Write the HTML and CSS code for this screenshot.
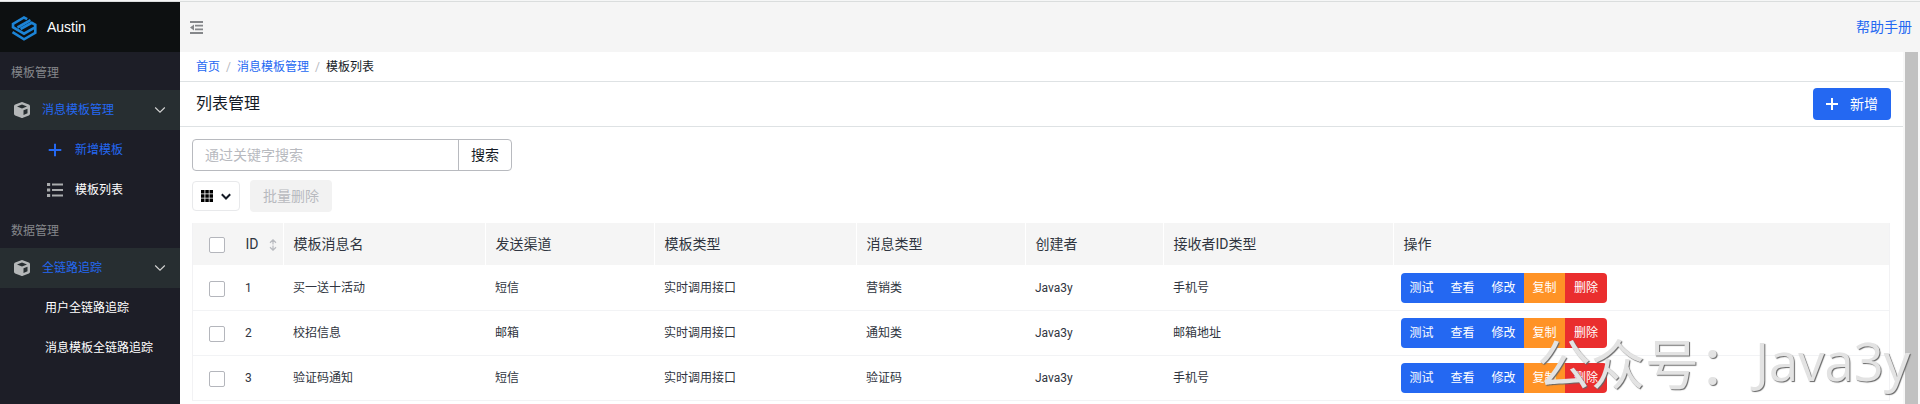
FILE: index.html
```html
<!DOCTYPE html>
<html lang="zh-CN">
<head>
<meta charset="utf-8">
<title>Austin</title>
<link rel="stylesheet" href="styles.css">
</head>
<body>
<svg class="defs" width="0" height="0">
  <symbol id="cube" viewBox="0 0 16 16"><path fill-rule="evenodd" d="M7.200.2a2 2 0 0 1 1.600 0l6 2.300c.7.3 1.200 1 1.200 1.700v7.500c0 .8-.4 1.400-1.100 1.700l-6 2.400a2 2 0 0 1-1.800 0l-6-2.400A1.900 1.900 0 0 1 0 11.700V4.200c0-.8.5-1.400 1.200-1.700zM8 2.400 3 4.400 8 6.500l5-2.100zM9.500 12.900l4-1.700V6.700L9.500 8.300z"/></symbol>
  <symbol id="down" viewBox="0 0 12 12"><path d="M1.200 3.500 6 8.200l4.800-4.700" fill="none" stroke="currentColor" stroke-width="1.100"/></symbol>
</svg>
<header class="header">
  <div class="brand">
    <svg class="logo" viewBox="0 0 26 26" fill="none" stroke="#1c84d6" stroke-width="2.600"><path d="M16.200 3.200 13 1.500 2 8v3.200l11 6.500 11-6.300"/><path d="M1.500 16.200 13 23.300l11.300-6.500V8.800l-3.600-2L9.500 13"/><path d="M19.500 4.200 6.500 11.500"/></svg>
    <span>Austin</span>
  </div>
  <div class="topbar">
    <svg class="fold" viewBox="0 0 13 13"><path d="M0 0h13v2H0zM5 3.800h8v1.800H5zM5 7.400h8v1.800H5zM0 11h13v2H0zM0 6.500l4-3v6z"/></svg>
    <a class="help">帮助手册</a>
  </div>
</header>
<div class="body">
  <nav class="side">
    <div class="label">模板管理</div>
    <a class="group"><svg class="cube"><use href="#cube"/></svg><span>消息模板管理</span><svg class="down"><use href="#down"/></svg></a>
    <a class="item active"><svg class="ico" viewBox="0 0 16 16"><path d="M7 1.700h2V7h5.300v2H9v5.300H7V9H1.700V7H7z"/></svg><span>新增模板</span></a>
    <a class="item"><svg class="ico list" viewBox="0 0 16 16"><path d="M0 1h3.200v3H0zM0 6.500h3.200v3H0zM0 12h3.200v3H0zM5 1.500h11v2H5zM5 7h11v2H5zM5 12.500h11v2H5z"/></svg><span>模板列表</span></a>
    <div class="label">数据管理</div>
    <a class="group"><svg class="cube"><use href="#cube"/></svg><span>全链路追踪</span><svg class="down"><use href="#down"/></svg></a>
    <a class="item plain">用户全链路追踪</a>
    <a class="item plain">消息模板全链路追踪</a>
  </nav>
  <main class="main">
    <div class="crumbs"><a>首页</a><i>/</i><a>消息模板管理</a><i>/</i><span>模板列表</span></div>
    <div class="titlebar"><h1>列表管理</h1><button class="add"><svg viewBox="0 0 12 12"><path d="M5 0h2v5h5v2H7v5H5V7H0V5h5z"/></svg>新增</button></div>
    <div class="content">
      <div class="search"><div class="input">通过关键字搜索</div><button>搜索</button></div>
      <div class="tools">
        <button class="cols"><svg width="12" height="12" viewBox="0 0 12 12"><path d="M0 0h3.500v3.500H0zM4.300 0h3.500v3.500H4.300zM8.500 0H12v3.500H8.500zM0 4.300h3.500v3.500H0zM4.300 4.300h3.500v3.500H4.300zM8.500 4.300H12v3.500H8.500zM0 8.500h3.500V12H0zM4.300 8.500h3.500V12H4.300zM8.500 8.500H12V12H8.500z"/></svg><svg width="10" height="8" viewBox="0 0 10 8"><path d="M.8 2.300 5 6.500l4.200-4.200" fill="none" stroke="#151b26" stroke-width="2"/></svg></button>
        <button class="bulk">批量删除</button>
      </div>
      <div class="table">
        <div class="row head"><div><b class="check"></b></div><div>ID<svg class="sort" viewBox="0 0 8 12"><path d="M1 3.700 4 .8l3 2.900M4 1v4.500M1 8.300l3 2.900 3-2.900M4 11V6.500" fill="none" stroke="#b8babf" stroke-width="1.200"/></svg></div><div>模板消息名</div><div>发送渠道</div><div>模板类型</div><div>消息类型</div><div>创建者</div><div>接收者ID类型</div><div>操作</div></div>
        <div class="row"><div><b class="check"></b></div><div>1</div><div>买一送十活动</div><div>短信</div><div>实时调用接口</div><div>营销类</div><div>Java3y</div><div>手机号</div><div class="ops"><a>测试</a><a>查看</a><a>修改</a><a class="copy">复制</a><a class="del">删除</a></div></div>
        <div class="row"><div><b class="check"></b></div><div>2</div><div>校招信息</div><div>邮箱</div><div>实时调用接口</div><div>通知类</div><div>Java3y</div><div>邮箱地址</div><div class="ops"><a>测试</a><a>查看</a><a>修改</a><a class="copy">复制</a><a class="del">删除</a></div></div>
        <div class="row"><div><b class="check"></b></div><div>3</div><div>验证码通知</div><div>短信</div><div>实时调用接口</div><div>验证码</div><div>Java3y</div><div>手机号</div><div class="ops"><a>测试</a><a>查看</a><a>修改</a><a class="copy">复制</a><a class="del">删除</a></div></div>
      </div>
    </div>
  </main>
  <div class="scroll"><div class="thumb"></div></div>
</div>
<div class="watermark">公众号：<span>Java3y</span></div>
</body>
</html>
```
FILE: styles.css
```css
* { box-sizing: border-box; }
body { margin: 0; height: 404px; overflow: hidden; display: flex; flex-direction: column; border-top: 1px solid #f5f6f6; font: 12px/18px Roboto, "Noto Sans CJK SC", sans-serif; color: #151b26; background: #fff; }
button { font: inherit; margin: 0; padding: 0; border: 0; display: flex; align-items: center; justify-content: center; }
.defs { position: absolute; }
.header { display: flex; height: 51px; flex: none; border-top: 1px solid #dadddd; background: #f5f5f5; }
.brand { width: 180px; background: #0d1011; display: flex; align-items: center; padding-left: 11px; color: #fff; font: 14px/20px "Liberation Sans", sans-serif; }
.logo { width: 26px; height: 26px; margin: 3px 10px 0 0; }
.topbar { flex: 1; display: flex; justify-content: space-between; align-items: center; padding: 0 8px 0 10px; }
.fold { width: 13px; height: 13px; fill: #85878a; }
.help { color: #2468f2; font-size: 14px; }
.body { display: flex; flex: 1; min-height: 0; }
.side { width: 180px; background: #1d1e27; color: #fff; }
.label { height: 38px; line-height: 43px; padding-left: 11px; color: #85878b; }
.group { height: 40px; display: flex; align-items: center; padding: 0 14px; background: #272e31; color: #2468f2; }
.cube { width: 16px; height: 16px; fill: #b4b7b8; margin-right: 12px; }
.down { width: 12px; height: 12px; margin-left: auto; color: #d4d4d4; }
.item { height: 40px; display: flex; align-items: center; padding-left: 47px; }
.ico { width: 16px; height: 16px; margin-right: 12px; fill: #aaacae; }
.active { color: #2468f2; }
.active .ico { fill: #2468f2; }
.plain { padding-left: 45px; }
.main { flex: 1; min-width: 0; }
.crumbs { height: 30px; padding-left: 16px; border-bottom: 1px solid #dee2e4; display: flex; align-items: center; }
.crumbs a { color: #2468f2; }
.crumbs i { font-style: normal; color: #b8babf; width: 17px; padding-left: 6px; }
.titlebar { height: 45px; border-bottom: 1px solid #dee2e4; display: flex; justify-content: space-between; align-items: center; padding: 0 12px 0 16px; }
h1 { margin: 0; font-size: 16px; font-weight: 400; }
.add { width: 78px; height: 32px; border-radius: 4px; background: #2468f2; color: #fff; font-size: 14px; gap: 12px; }
.add svg { width: 12px; height: 12px; fill: #fff; }
.content { padding: 12px 13px 0 12px; }
.search { display: flex; width: 320px; height: 32px; border: 1px solid #b8babf; border-radius: 4px; font-size: 14px; }
.input { flex: 1; line-height: 30px; padding-left: 12px; color: #b8babf; }
.search button { width: 53px; border-left: 1px solid #b8babf; background: none; color: #151b26; }
.tools { display: flex; gap: 10px; align-items: center; margin: 9px 0 11px; }
.cols { width: 48px; height: 30px; border: 1px solid #e8e9eb; border-radius: 4px; background: #fff; gap: 8px; }
.bulk { width: 82px; height: 32px; border-radius: 4px; background: #f2f2f2; color: #b8babf; font-size: 14px; }
.table { border: solid #f2f2f4; border-width: 0 1px; }
.row { display: grid; grid-template-columns: 43px 48px 202px 169px 202px 169px 138px 230px 1fr; height: 45px; border-bottom: 1px solid #f2f3f5; color: #303540; }
.row > div { display: flex; align-items: center; padding-left: 9px; }
.row > div:first-child { padding-left: 16px; }
.head { height: 43px; background: #f5f5f5; border-bottom-color: #fff; font-size: 14px; }
.head > div { border-right: 1px solid #fff; padding-left: 9.500px; }
.head > div:first-child, .head > div:last-child { border-right: 0; }
.check { width: 16px; height: 16px; border: 1px solid #b4b6bc; border-radius: 2px; background: #fff; margin-top: 2px; }
.sort { width: 8px; height: 12px; margin: 2px 0 0 10px; }
.row .ops { padding-left: 7px; }
.ops a { width: 41px; height: 30px; line-height: 30px; text-align: center; background: #2468f2; color: #fff; }
.ops a:first-child { border-radius: 4px 0 0 4px; }
.ops .copy { background: #ff9326; }
.ops .del { width: 42px; background: #ea2e2e; border-radius: 0 4px 4px 0; }
.scroll { width: 17px; background: #f8f8f8; padding: 0 2px; }
.thumb { height: 100%; background: #c1c1c1; }
.watermark { position: absolute; left: 1537px; top: 322px; font: 54px/80px "Noto Sans CJK SC", sans-serif; white-space: nowrap; color: #e3e3e3; text-shadow: 1px 1px 1px #666; display: flex; }
.watermark span { font-family: "Open Sans", sans-serif; font-size: 52.500px; line-height: 78px; margin-left: 2px; }
```
